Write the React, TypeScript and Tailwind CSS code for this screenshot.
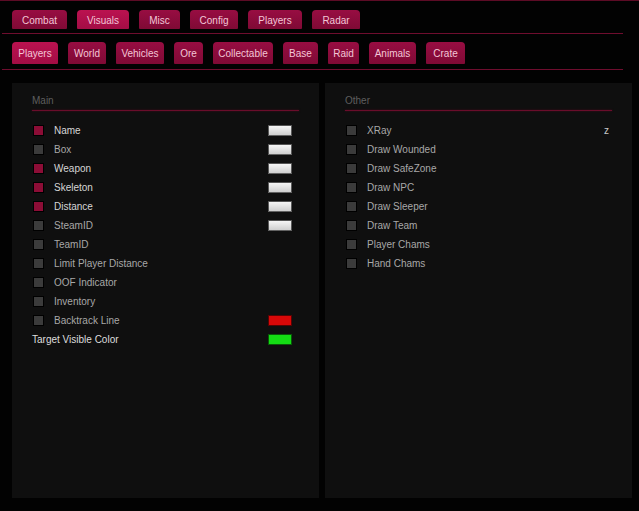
import React from 'react';

type Row = { label: string; checked?: boolean; swatch?: string; noBox?: boolean; bright?: boolean };

const topTabs = [
  { label: 'Combat', w: 'w-[55px]' },
  { label: 'Visuals', w: 'w-[52px]', active: true },
  { label: 'Misc', w: 'w-[41px]' },
  { label: 'Config', w: 'w-[48px]' },
  { label: 'Players', w: 'w-[54px]' },
  { label: 'Radar', w: 'w-[48px]' },
];

const subTabs = [
  { label: 'Players', w: 'w-[46px]', active: true },
  { label: 'World', w: 'w-[38px]' },
  { label: 'Vehicles', w: 'w-[48px]' },
  { label: 'Ore', w: 'w-[29px]' },
  { label: 'Collectable', w: 'w-[60px]' },
  { label: 'Base', w: 'w-[35px]' },
  { label: 'Raid', w: 'w-[31px]' },
  { label: 'Animals', w: 'w-[47px]' },
  { label: 'Crate', w: 'w-[39px]' },
];

const mainRows: Row[] = [
  { label: 'Name', checked: true, swatch: 'white' },
  { label: 'Box', swatch: 'white' },
  { label: 'Weapon', checked: true, swatch: 'white' },
  { label: 'Skeleton', checked: true, swatch: 'white' },
  { label: 'Distance', checked: true, swatch: 'white' },
  { label: 'SteamID', swatch: 'white' },
  { label: 'TeamID' },
  { label: 'Limit Player Distance' },
  { label: 'OOF Indicator' },
  { label: 'Inventory' },
  { label: 'Backtrack Line', swatch: 'red' },
  { label: 'Target Visible Color', noBox: true, bright: true, swatch: 'green' },
];

const otherRows = ['XRay', 'Draw Wounded', 'Draw SafeZone', 'Draw NPC', 'Draw Sleeper', 'Draw Team', 'Player Chams', 'Hand Chams'];

// swatch colours
const Swatch: React.FC<{ kind: string }> = ({ kind }) => {
  if (kind === 'red') return <div className="w-[24px] h-[11px] bg-[#d80808] border border-black/60" />;
  if (kind === 'green') return <div className="w-[24px] h-[11px] bg-[#14dc14] border border-black/60" />;
  return <div className="w-[24px] h-[11px] bg-gradient-to-b from-[#f6f6f6] to-[#cfcfcf] border border-black/60" />;
};

const Tab: React.FC<{ label: string; w: string; active?: boolean; h: string }> = ({ label, w, active, h }) => (
  <div
    className={`${w} ${h} flex items-center justify-center pt-px rounded-t-[4px] rounded-b-[1px] text-[10px] text-[#f3c6d6] ${
      active
        ? 'bg-gradient-to-b from-[#bb1250] to-[#a30d45]'
        : 'bg-gradient-to-b from-[#980d42] to-[#7f0a35]'
    }`}
  >
    {label}
  </div>
);

const Checkbox: React.FC<{ checked?: boolean }> = ({ checked }) => (
  <div className={`w-[11px] h-[11px] ml-[1px] border border-black ${checked ? 'bg-[#8c0d36]' : 'bg-[#3b3b3b]'}`} />
);

const App: React.FC = () => {
  return (
    <div
      className="w-full h-[511px] bg-[#020202] overflow-hidden flex flex-col"
      style={{ fontFamily: '"Liberation Sans", Arial, sans-serif' }}
    >
      {/* top accent line */}
      <div className="h-px w-full bg-[#5c0b25]" />

      {/* Main tabs */}
      <div className="flex gap-[10px] pl-[12px] pt-[9px]">
        {topTabs.map((t) => (
          <Tab key={t.label} label={t.label} w={t.w} active={t.active} h="h-[19px]" />
        ))}
      </div>
      <div className="mt-[4px] ml-[2px] w-[621px] h-px bg-[#6e0d2e]" />

      {/* Sub tabs */}
      <div className="flex gap-[10px] pl-[12px] mt-[8px]">
        {subTabs.map((t) => (
          <Tab key={t.label} label={t.label} w={t.w} active={t.active} h="h-[22px]" />
        ))}
      </div>
      <div className="mt-[5px] ml-[2px] w-[621px] h-px bg-[#6e0d2e]" />

      {/* Panels */}
      <div className="flex gap-[6px] pl-[12px] mt-[13px]">
        {/* Main */}
        <div className="w-[307px] h-[415px] bg-[#0f0f0f] px-[20px] pt-[12px]">
          <div className="text-[10px] leading-[12px] text-[#5e5e5e]">Main</div>
          <div className="mt-[3px] h-px bg-[#6a0d2b] shadow-[0_0_2px_#5a0a24]" />
          <div className="mt-[10px] flex flex-col">
            {mainRows.map((r) => (
              <div key={r.label} className="h-[19px] flex items-center">
                {!r.noBox && <Checkbox checked={r.checked} />}
                <span
                  className={`text-[10px] ${r.noBox ? '' : 'ml-[10px]'} ${
                    r.bright ? 'text-[#dedede]' : r.checked ? 'text-[#d6d6d6]' : 'text-[#a8a8a8]'
                  }`}
                >
                  {r.label}
                </span>
                {r.swatch && (
                  <div className="ml-auto mr-[7px]">
                    <Swatch kind={r.swatch} />
                  </div>
                )}
              </div>
            ))}
          </div>
        </div>

        {/* Other */}
        <div className="w-[307px] h-[415px] bg-[#0f0f0f] px-[20px] pt-[12px]">
          <div className="text-[10px] leading-[12px] text-[#5e5e5e]">Other</div>
          <div className="mt-[3px] h-px bg-[#6a0d2b] shadow-[0_0_2px_#5a0a24]" />
          <div className="mt-[10px] flex flex-col">
            {otherRows.map((label, i) => (
              <div key={label} className="h-[19px] flex items-center">
                <Checkbox />
                <span className="ml-[10px] text-[10px] text-[#a8a8a8]">{label}</span>
                {i === 0 && <span className="ml-auto mr-[3px] text-[10px] text-[#c8c8c8]">z</span>}
              </div>
            ))}
          </div>
        </div>
      </div>
    </div>
  );
};

export default App;
